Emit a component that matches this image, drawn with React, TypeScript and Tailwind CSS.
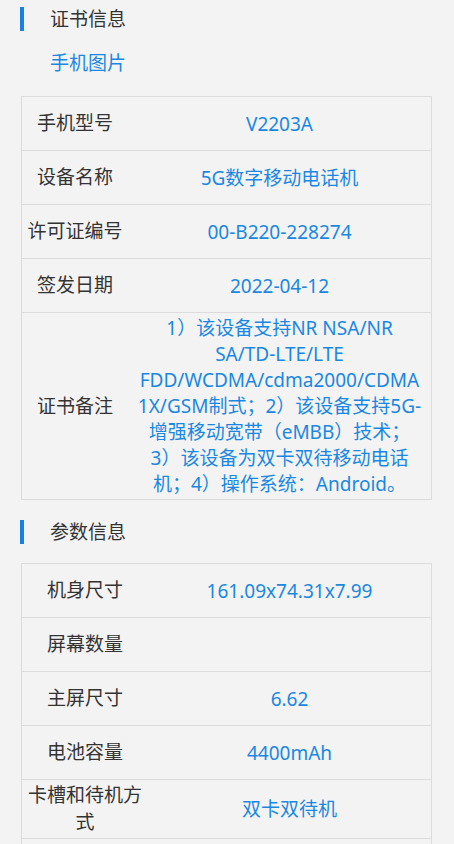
import React from "react";

const BLUE = "text-[#1a88e2]";

function Header({ title }: { title: string }) {
  return (
    <div className="flex h-[38px] items-center pl-[20px]">
      <div className="h-[24px] w-[4px] bg-[#1a80e6]" />
      <div className="ml-[26px] text-[19px] leading-[26px] text-[#333333]">{title}</div>
    </div>
  );
}

type Row = { label: React.ReactNode; value: React.ReactNode };

function Table({ rows, labelWidth }: { rows: Row[]; labelWidth: "a" | "b" }) {
  return (
    <div className="ml-[21px] w-[411px] border border-[#dcdcdc]">
      {rows.map((r, i) => (
        <div
          key={i}
          className={
            (labelWidth === "a" ? "grid-cols-[106px_1fr] " : "grid-cols-[126px_1fr] ") +
            "grid min-h-[54px] items-center " +
            (i < rows.length - 1 ? "border-b border-[#dcdcdc]" : "")
          }
        >
          <div className="px-[3px] py-[2px] text-center text-[19px] leading-[27px] text-[#333333]">
            {r.label}
          </div>
          <div className={"py-[2px] text-center text-[19px] leading-[26px] " + BLUE}>{r.value}</div>
        </div>
      ))}
    </div>
  );
}

export default function App() {
  const noteLines = [
    "1）该设备支持NR NSA/NR",
    "SA/TD-LTE/LTE",
    "FDD/WCDMA/cdma2000/CDMA",
    "1X/GSM制式；2）该设备支持5G-",
    "增强移动宽带（eMBB）技术；",
    "3）该设备为双卡双待移动电话",
    "机；4）操作系统：Android。",
  ];
  const rows1: Row[] = [
    { label: "手机型号", value: "V2203A" },
    { label: "设备名称", value: "5G数字移动电话机" },
    { label: "许可证编号", value: "00-B220-228274" },
    { label: "签发日期", value: "2022-04-12" },
    {
      label: "证书备注",
      value: (
        <div className="flex flex-col items-center">
          {noteLines.map((l, i) => (
            <div key={i} className="whitespace-nowrap">
              {l}
            </div>
          ))}
        </div>
      ),
    },
  ];
  const rows2: Row[] = [
    { label: "机身尺寸", value: "161.09x74.31x7.99" },
    { label: "屏幕数量", value: "" },
    { label: "主屏尺寸", value: "6.62" },
    { label: "电池容量", value: "4400mAh" },
    { label: "卡槽和待机方式", value: "双卡双待机" },
    { label: "", value: "" },
  ];
  return (
    <div className="min-h-screen bg-[#f3f3f3] font-['Noto_Sans','Noto_Sans_CJK_SC',sans-serif]">
      <Header title="证书信息" />
      <div className={"mt-[11px] h-[28px] pl-[50px] text-[19px] leading-[28px] " + BLUE}>手机图片</div>
      <div className="mt-[19px]">
        <Table rows={rows1} labelWidth="a" />
      </div>
      <div className="mt-[13px]">
        <Header title="参数信息" />
      </div>
      <div className="mt-[12px] pb-[20px]">
        <Table rows={rows2} labelWidth="b" />
      </div>
    </div>
  );
}
